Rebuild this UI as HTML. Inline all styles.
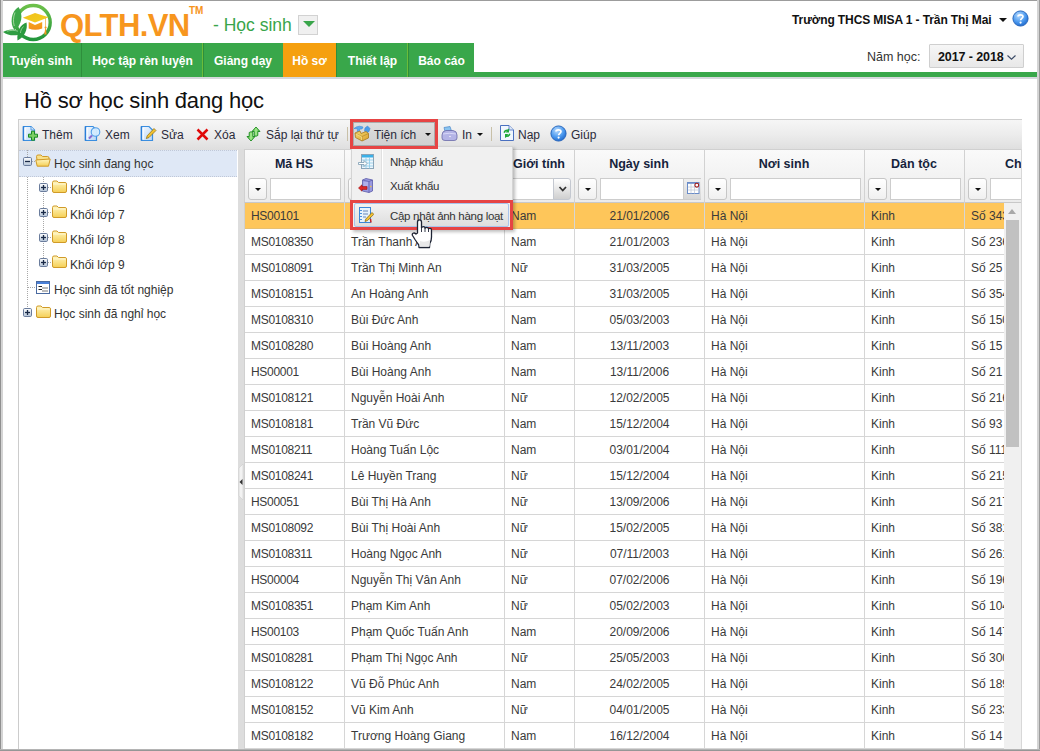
<!DOCTYPE html>
<html><head><meta charset="utf-8"><style>
*{margin:0;padding:0;box-sizing:border-box}
html,body{width:1040px;height:751px;overflow:hidden;background:#fff}
body{position:relative;font-family:"Liberation Sans",sans-serif;color:#222}
.a{position:absolute}
.frame-t{left:0;top:0;width:1040px;height:1px;background:#9c9c9c}
.frame-l{left:0;top:0;width:1px;height:751px;background:#909090}
.frame-l2{left:1px;top:0;width:2px;height:751px;background:#d4d4d4}
.frame-r{left:1039px;top:0;width:1px;height:751px;background:#9c9c9c}
.frame-r2{left:1037px;top:0;width:2px;height:751px;background:#d4d4d4}
.frame-b{left:0;top:749px;width:1040px;height:2px;background:linear-gradient(#b4b4b4 0 1px,#969696 1px)}
.logo-text{left:60px;top:8px;font-size:31px;font-weight:bold;color:#f7961e;line-height:36px;white-space:nowrap;letter-spacing:-0.6px}
.tm{left:189px;top:5px;font-size:10px;font-weight:bold;color:#f7941d;line-height:12px}
.mod{left:213px;top:13px;font-size:17.5px;color:#39a54a;line-height:24px;white-space:nowrap}
.moddd{left:298px;top:15px;width:20px;height:20px;background:#f0f0f0;border:1px solid #d2d2d2}
.user{left:792px;top:11px;font-size:12px;font-weight:bold;color:#111;line-height:18px;white-space:nowrap;letter-spacing:-0.1px}
.nav{left:1px;top:43px;width:473px;height:34px;background:#39a74a}
.navline{left:474px;top:72px;width:563px;height:5px;background:#39a74a}
.grayline{left:1px;top:77px;width:1036px;height:2px;background:#d5d8dc}
.tab{position:absolute;top:0;height:34px;line-height:36px;color:#fff;font-weight:bold;font-size:12px;text-align:center;white-space:nowrap}
.tabsep{position:absolute;top:0;width:1px;height:34px;background:#2e8e3c}
.tabsep2{position:absolute;top:0;width:1px;height:34px;background:#6cbc3a}
.nam{left:867px;top:48px;font-size:12.5px;color:#333;line-height:18px;white-space:nowrap}
.yearbox{left:929px;top:44px;width:95px;height:24px;border:1px solid #cfcfcf;background:linear-gradient(#f6f6f6,#e8e8e8);border-radius:1px}
.year{left:938px;top:48px;font-size:12.5px;font-weight:bold;color:#111;line-height:18px;white-space:nowrap;letter-spacing:-0.1px}
.title{left:24px;top:88px;font-size:22px;color:#111;line-height:26px;white-space:nowrap;letter-spacing:-0.2px}
.toolbar{left:18px;top:119px;width:1004px;height:31px;border-top:1px solid #cfcfcf;border-left:1px solid #cfcfcf;background:linear-gradient(#f6f6f6 0%,#ececec 50%,#dedede 100%)}
.tb{position:absolute;top:126px;font-size:12px;line-height:18px;color:#2a2a3a;white-space:nowrap}
.tbsep{position:absolute;top:127px;width:1px;height:14px;background:#c8c0a8}
.tree{left:18px;top:150px;width:220px;height:601px;border-left:1px solid #cccccc;background:#fff}
.treesel{left:19px;top:150px;width:218px;height:27px;background:#dfe8f6;border-top:1px dotted #c0c8d8;border-bottom:1px dotted #c0c8d8}
.tn{position:absolute;font-size:12px;line-height:18px;color:#333;white-space:nowrap}
.splitter{left:238px;top:149px;width:6px;height:602px;background:#dddddd}
.ghead{left:244px;top:149px;width:777px;height:54px;background:linear-gradient(#fafafa,#ebebeb);border-top:1px solid #d0d0d0;border-bottom:1px solid #c8c8c8;border-left:1px solid #d0d0d0}
.hsep{position:absolute;top:149px;width:1px;height:54px;background:#d2d2d2}
.ht{position:absolute;top:155px;font-size:12.5px;font-weight:bold;color:#15233c;line-height:18px;text-align:center;white-space:nowrap}
.fbtn{position:absolute;top:178px;width:19px;height:22px;border:1px solid #c6c6c6;border-radius:3px;background:linear-gradient(#ffffff,#f0f0f0)}
.fbtn:after{content:"";position:absolute;left:5.5px;top:9px;border-left:3.5px solid transparent;border-right:3.5px solid transparent;border-top:3.5px solid #111}
.finp{position:absolute;top:178px;height:22px;border:1px solid #cdcdcd;background:#fff}
.gbody{left:244px;top:203px;width:760px;height:548px;background:#fff;border-left:1px solid #d0d0d0}
.row{position:absolute;left:245px;width:759px;height:26px;border-bottom:1px solid #d6d6d6;font-size:12px;line-height:27px;color:#3a3a3a}
.row.sel{background:#fec65a;border-bottom-color:#e8c070}
.cell{position:absolute;top:0;height:25px;padding-left:6px;white-space:nowrap;overflow:hidden}
.cell.ctr{text-align:center;padding-left:0}
.vsep{position:absolute;top:203px;width:1px;height:548px;background:#d6d6d6}
.sbar{left:1004px;top:203px;width:17px;height:548px;background:#f0f0f0}
.sthumb{left:1006px;top:220px;width:13px;height:227px;background:#c1c1c1}
.sline{left:1021px;top:149px;width:1px;height:602px;background:#d8d8d8}
.menu{left:351px;top:146px;width:162px;height:84px;background:#f0f0f0;border:1px solid #d4d4d4;box-shadow:2px 2px 3px rgba(0,0,0,0.25)}
.msep{left:381px;top:148px;width:1px;height:52px;background:#e0e0e0}
.msep2{left:382px;top:148px;width:1px;height:52px;background:#fff}
.mi{position:absolute;font-size:11.5px;letter-spacing:-0.3px;line-height:18px;color:#333;white-space:nowrap}
.mhl{left:354px;top:203px;width:155px;height:24px;border:1px solid #a8c4ec;border-radius:2px;background:linear-gradient(#f2f2f2,#dedede)}
.red{position:absolute;border:3px solid #e64444}


</style></head><body>

<!-- logo -->
<svg class="a" style="left:2px;top:2px" width="52" height="42" viewBox="0 0 52 42">
 <defs><linearGradient id="ring" x1="0" y1="0" x2="0" y2="1"><stop offset="0" stop-color="#6cc04a"/><stop offset="1" stop-color="#22963c"/></linearGradient>
 <linearGradient id="capg" x1="0" y1="0" x2="1" y2="1"><stop offset="0" stop-color="#f3bf1a"/><stop offset="1" stop-color="#f0d020"/></linearGradient>
 <linearGradient id="baseg" x1="0" y1="0" x2="0" y2="1"><stop offset="0" stop-color="#f7a41e"/><stop offset="1" stop-color="#f39018"/></linearGradient></defs>
 <circle cx="31.2" cy="20.5" r="17" fill="none" stroke="url(#ring)" stroke-width="3.4"/>
 <path d="M26.7 20 L33 23 L40.2 20 L40.2 26.5 Q33 29 26.7 26.5 Z" fill="url(#baseg)"/>
 <path d="M20.8 15.7 L33 10.9 L46.6 15.2 L33 20.6 Z" fill="url(#capg)"/>
 <path d="M43.3 16 L43.3 26 L42.2 32.6 L44.6 32.6 L43.9 26 L43.9 16 Z" fill="#f39a1e"/>
 <circle cx="43.6" cy="25.5" r="1.1" fill="#f39a1e"/>
 <path d="M16.5 5 C9 9 7.5 22 12.5 28 C20 23.5 21.5 12 16.5 5 Z" fill="#3ea84a"/>
 <path d="M13 10.5 C11.2 15 11 20 12.3 24" fill="none" stroke="#c8ecc0" stroke-width="0.7"/>
 <path d="M1 30 C6.5 26.5 15 26.5 21 31 C14.5 34.5 6.5 34 1 30 Z" fill="#2f9e42"/>
 <path d="M5 29.2 C9 28 13 28.2 16 29.2" fill="none" stroke="#c8ecc0" stroke-width="0.6"/>
 <path d="M24.5 20.5 C18 22.5 14.5 30 15.5 38.5 C22.5 35 26 27 24.5 20.5 Z" fill="#2a9a3e"/>
 <path d="M21.5 24.5 C19.5 26.5 18.5 29 18.5 31" fill="none" stroke="#c8ecc0" stroke-width="0.6"/>
</svg>
<div class="a logo-text">QLTH.VN</div>
<div class="a tm">TM</div>
<div class="a mod">- Học sinh</div>
<div class="a moddd"><div style="position:absolute;left:4px;top:5px;border-left:6px solid transparent;border-right:6px solid transparent;border-top:6px solid #39a54a"></div></div>

<div class="a user">Trường THCS MISA 1 - Trần Thị Mai</div>
<div class="a" style="left:999px;top:18px;border-left:4px solid transparent;border-right:4px solid transparent;border-top:4px solid #111"></div>
<svg class="a" style="left:1012px;top:10px" width="17" height="17" viewBox="0 0 17 17">
 <circle cx="8.5" cy="8.5" r="7.6" fill="url(#hg)" stroke="#2060b8" stroke-width="0.9"/>
 <path d="M6 6.6 C6 4.3 11 4.1 11 6.6 C11 8.3 8.6 8.4 8.6 10.2" fill="none" stroke="#fff" stroke-width="1.7"/>
 <circle cx="8.6" cy="12.6" r="1.1" fill="#fff"/>
</svg>

<!-- nav -->
<div class="a nav">
 <div class="tab" style="left:0;width:80px">Tuyển sinh</div>
 <div class="tabsep" style="left:80px"></div>
 <div class="tab" style="left:81px;width:121px">Học tập rèn luyện</div>
 <div class="tabsep2" style="left:201px"></div><div class="tabsep" style="left:202px"></div>
 <div class="tab" style="left:202px;width:80px">Giảng dạy</div>
 <div class="tab" style="left:282px;width:53px;background:#f5a00f">Hồ sơ</div>
 <div class="tabsep" style="left:335px"></div>
 <div class="tab" style="left:336px;width:71px">Thiết lập</div>
 <div class="tabsep2" style="left:406px"></div><div class="tabsep" style="left:407px"></div>
 <div class="tab" style="left:408px;width:65px">Báo cáo</div>
</div>
<div class="a navline"></div>
<div class="a grayline"></div>

<div class="a nam">Năm học:</div>
<div class="a yearbox"></div>
<div class="a year">2017 - 2018</div>
<svg class="a" style="left:1007px;top:55px" width="9" height="5" viewBox="0 0 9 5"><path d="M0.5 0.5 L4.5 4.2 L8.5 0.5" fill="none" stroke="#3a4a66" stroke-width="1.1"/></svg>

<div class="a title">Hồ sơ học sinh đang học</div>

<!-- toolbar -->
<div class="a toolbar"></div>
<svg class="a" style="left:0;top:0" width="0" height="0"><defs>
 <linearGradient id="docg" x1="0" y1="0" x2="1" y2="1"><stop offset="0" stop-color="#f4f9ff"/><stop offset="1" stop-color="#b8d6f6"/></linearGradient>
 <radialGradient id="hg" cx="40%" cy="30%" r="75%"><stop offset="0" stop-color="#b8dcff"/><stop offset="0.6" stop-color="#4a98ee"/><stop offset="1" stop-color="#1c64c8"/></radialGradient>
 <linearGradient id="fold" x1="0" y1="0" x2="0" y2="1"><stop offset="0" stop-color="#fff6c0"/><stop offset="1" stop-color="#f5cf55"/></linearGradient>
 <linearGradient id="pm" x1="0" y1="0" x2="0" y2="1"><stop offset="0" stop-color="#ffffff"/><stop offset="1" stop-color="#b4c4d8"/></linearGradient>
</defs></svg>
<svg class="a" style="left:22px;top:125px" width="17" height="17" viewBox="0 0 17 17">
 <path d="M1.5 1.5 H9 L12.5 5 V15.5 H1.5 Z" fill="url(#docg)" stroke="#3a8ee0" stroke-width="1.2"/><path d="M1.5 1.5 V15.5" stroke="#2a7ed8" stroke-width="1.6"/>
 <path d="M3 2.5 V14.5" stroke="#ffffff" stroke-width="1.2"/>
 <path d="M9 1.5 V5 H12.5" fill="#dceaf8" stroke="#3a8ee0" stroke-width="0.8"/>
 <path d="M9.5 6.2 H12.5 V9.2 H15.5 V12.2 H12.5 V15.2 H9.5 V12.2 H6.5 V9.2 H9.5 Z" fill="#7ccf62" stroke="#1a8a22" stroke-width="1"/>
</svg>
<div class="tb" style="left:42px">Thêm</div>
<svg class="a" style="left:84px;top:125px" width="17" height="17" viewBox="0 0 17 17">
 <path d="M1.5 1.5 H9 L12.5 5 V15.5 H1.5 Z" fill="url(#docg)" stroke="#3a8ee0" stroke-width="1.2"/><path d="M1.5 1.5 V15.5" stroke="#2a7ed8" stroke-width="1.6"/>
 <path d="M3 2.5 V14.5" stroke="#ffffff" stroke-width="1.2"/>
 <circle cx="11.5" cy="7" r="4.3" fill="#d4ecff" stroke="#4a9ae8" stroke-width="1.1" opacity="0.95"/>
 <path d="M8 10.5 L5 13.5" stroke="#8a6ad0" stroke-width="2"/>
</svg>
<div class="tb" style="left:105px">Xem</div>
<svg class="a" style="left:140px;top:125px" width="17" height="17" viewBox="0 0 17 17">
 <path d="M1.5 1.5 H9 L12.5 5 V15.5 H1.5 Z" fill="url(#docg)" stroke="#3a8ee0" stroke-width="1.2"/><path d="M1.5 1.5 V15.5" stroke="#2a7ed8" stroke-width="1.6"/>
 <path d="M3 2.5 V14.5" stroke="#ffffff" stroke-width="1.2"/>
 <path d="M14 3.5 L16 5.5 L9 12.5 L6.3 13.6 L7.2 10.8 Z" fill="#f2c230" stroke="#8a6a10" stroke-width="0.7"/>
</svg>
<div class="tb" style="left:161px">Sửa</div>
<svg class="a" style="left:196px;top:128px" width="13" height="13" viewBox="0 0 13 13">
 <path d="M1.5 1.5 L11.5 11.5 M11.5 1.5 L1.5 11.5" stroke="#e00808" stroke-width="2.5"/>
</svg>
<div class="tb" style="left:214px">Xóa</div>
<svg class="a" style="left:246px;top:126px" width="15" height="16" viewBox="0 0 15 16">
 <defs><linearGradient id="arg" x1="0" y1="0" x2="1" y2="0"><stop offset="0" stop-color="#44b03a"/><stop offset="0.5" stop-color="#a8ec90"/><stop offset="1" stop-color="#44b03a"/></linearGradient></defs>
 <path d="M10 1 L14 5.5 L11.8 5.5 L11.8 9.5 Q10 11 8.2 9.5 L8.2 5.5 L6 5.5 Z" fill="url(#arg)" stroke="#1a8a1e" stroke-width="0.9" stroke-linejoin="round"/>
 <path d="M5 15 L1 10.5 L3.2 10.5 L3.2 6.5 Q5 5 6.8 6.5 L6.8 10.5 L9 10.5 Z" fill="url(#arg)" stroke="#1a8a1e" stroke-width="0.9" stroke-linejoin="round"/>
</svg>
<div class="tb" style="left:266px">Sắp lại thứ tự</div>
<div class="tbsep" style="left:347px"></div>
<div class="a" style="left:353px;top:122px;width:82px;height:24px;border:1px solid #ababab;background:linear-gradient(#dedede,#d0d0d0)"></div>
<svg class="a" style="left:353px;top:124px" width="18" height="18" viewBox="0 0 18 18">
 <defs><linearGradient id="boxg" x1="0" y1="0" x2="1" y2="1"><stop offset="0" stop-color="#f6dc70"/><stop offset="1" stop-color="#d8a030"/></linearGradient></defs>
 <path d="M1 4.5 Q3 2.5 6.5 2.2 L10 3 L9 5 L7 4.8 L6 9 L4 8.5 L4.8 5 Z" fill="#5aaaf0" stroke="#3a86d8" stroke-width="0.6"/>
 <path d="M12 4 L14.5 2 L17 4.5 L16 7.5 L13.5 9 L11.5 7 Z" fill="#4a9ce8" stroke="#3a86d8" stroke-width="0.6"/>
 <path d="M2 9 L7 7 L8 9.5 L13 7.5 L15.5 9.5 L15.5 14 L9 17 L2.5 13.5 Z" fill="url(#boxg)" stroke="#a87a20" stroke-width="0.8" stroke-linejoin="round"/>
 <path d="M2 9 L9 12.5 L15.5 9.5 M9 12.5 L9 17" fill="none" stroke="#b88a28" stroke-width="0.7"/>
 <path d="M3 10 L8.5 12.8 L8.5 16" fill="none" stroke="#fff2a8" stroke-width="0.6"/>
</svg>
<div class="tb" style="left:374px">Tiện ích</div>
<div class="a" style="left:425px;top:133px;border-left:3px solid transparent;border-right:3px solid transparent;border-top:3px solid #111"></div>
<svg class="a" style="left:441px;top:126px" width="17" height="16" viewBox="0 0 17 16">
 <path d="M3 1.5 L9 0.5 L10.5 5 L4 5.5 Z" fill="#8ac4f0" stroke="#4a86c8" stroke-width="0.7"/>
 <path d="M1 9 Q1 5 5 4.5 L12 4.5 Q16 5 16 9 L16 12 Q16 14.5 13 14.5 L4 14.5 Q1 14.5 1 12 Z" fill="#b4b4e6" stroke="#6a6aa8" stroke-width="0.8"/>
 <path d="M2 8 Q8 6.5 15 8" fill="none" stroke="#d8d8f8" stroke-width="1"/>
 <circle cx="9" cy="10.5" r="0.7" fill="#fff"/>
</svg>
<div class="tb" style="left:462px">In</div>
<div class="a" style="left:477px;top:133px;border-left:3px solid transparent;border-right:3px solid transparent;border-top:3px solid #111"></div>
<div class="tbsep" style="left:491px"></div>
<svg class="a" style="left:500px;top:125px" width="14" height="16" viewBox="0 0 14 16">
 <path d="M0.5 0.5 H9 L13.5 5 V15.5 H0.5 Z" fill="#f0f6fe" stroke="#4a70c0"/>
 <path d="M9 0.5 V5 H13.5" fill="#dde8f8" stroke="#4a70c0" stroke-width="0.8"/>
 <path d="M3.5 7.5 Q4 4.5 7.5 4.5 L9 3.5 V7.5 H5.5 L6.8 6.3 Q5.3 6 4.9 8 Z" fill="#1ea838"/>
 <path d="M10.5 9 Q10 12 6.5 12 L5 13 V9 H8.5 L7.2 10.2 Q8.7 10.5 9.1 8.5 Z" fill="#1ea838"/>
</svg>
<div class="tb" style="left:518px">Nạp</div>
<svg class="a" style="left:550px;top:125px" width="17" height="17" viewBox="0 0 17 17">
 <circle cx="8.5" cy="8.5" r="7.6" fill="url(#hg)" stroke="#2060b8" stroke-width="0.9"/>
 <path d="M6 6.6 C6 4.3 11 4.1 11 6.6 C11 8.3 8.6 8.4 8.6 10.2" fill="none" stroke="#fff" stroke-width="1.7"/>
 <circle cx="8.6" cy="12.6" r="1.1" fill="#fff"/>
</svg>
<div class="tb" style="left:571px">Giúp</div>

<!-- tree -->
<div class="a tree"></div>
<div class="a treesel"></div>
<div class="tn" style="left:54px;top:155px">Học sinh đang học</div>
<div class="tn" style="left:70px;top:181px">Khối lớp 6</div>
<div class="tn" style="left:70px;top:206px">Khối lớp 7</div>
<div class="tn" style="left:70px;top:231px">Khối lớp 8</div>
<div class="tn" style="left:70px;top:256px">Khối lớp 9</div>
<div class="tn" style="left:54px;top:281px">Học sinh đã tốt nghiệp</div>
<div class="tn" style="left:54px;top:305px">Học sinh đã nghỉ học</div>
<div class="a" style="left:27px;top:177px;width:1px;height:123px;background:repeating-linear-gradient(#a8a8a8 0 1px,transparent 1px 2px)"></div>
<div class="a" style="left:27px;top:150px;width:1px;height:7px;background:repeating-linear-gradient(#a8a8a8 0 1px,transparent 1px 2px)"></div>
<div class="a" style="left:43px;top:177px;width:1px;height:85px;background:repeating-linear-gradient(#a8a8a8 0 1px,transparent 1px 2px)"></div>
<div class="a" style="left:28px;top:287px;width:8px;height:1px;background:repeating-linear-gradient(90deg,#a8a8a8 0 1px,transparent 1px 2px)"></div>
<div class="a" style="left:32px;top:161px;width:3px;height:1px;background:repeating-linear-gradient(90deg,#a8a8a8 0 1px,transparent 1px 2px)"></div>
<div class="a" style="left:48px;top:187px;width:4px;height:1px;background:repeating-linear-gradient(90deg,#a8a8a8 0 1px,transparent 1px 2px)"></div>
<div class="a" style="left:48px;top:212px;width:4px;height:1px;background:repeating-linear-gradient(90deg,#a8a8a8 0 1px,transparent 1px 2px)"></div>
<div class="a" style="left:48px;top:237px;width:4px;height:1px;background:repeating-linear-gradient(90deg,#a8a8a8 0 1px,transparent 1px 2px)"></div>
<div class="a" style="left:48px;top:262px;width:4px;height:1px;background:repeating-linear-gradient(90deg,#a8a8a8 0 1px,transparent 1px 2px)"></div>
<svg class="a" style="left:23px;top:157px" width="9" height="9" viewBox="0 0 9 9"><rect x="0.5" y="0.5" width="8" height="8" rx="1.2" fill="url(#pm)" stroke="#6a7c9c"/><path d="M2 4.5 H7" stroke="#1a2a48" stroke-width="1.3"/></svg>
<svg class="a" style="left:35px;top:154px" width="16" height="13" viewBox="0 0 16 13"><path d="M1.5 2.5 Q1.5 1 3 1 L6 1 L7.5 2.5 L12.5 2.5 Q14 2.5 14 4 L14 6 L2 6 Z" fill="#f8e08a" stroke="#d09a28"/><path d="M0.8 6 L15.2 5 L13.5 12.2 L2.2 12.2 Z" fill="url(#fold)" stroke="#d09a28"/></svg>
<svg class="a" style="left:39px;top:183px" width="9" height="9" viewBox="0 0 9 9"><rect x="0.5" y="0.5" width="8" height="8" rx="1.2" fill="url(#pm)" stroke="#6a7c9c"/><path d="M2 4.5 H7" stroke="#1a2a48" stroke-width="1.3"/><path d="M4.5 2 V7" stroke="#1a2a48" stroke-width="1.3"/></svg>
<svg class="a" style="left:52px;top:180px" width="15" height="13" viewBox="0 0 15 13"><path d="M0.5 2.5 Q0.5 1 2 1 L5 1 L6.5 2.5 L13 2.5 Q14.5 2.5 14.5 4 L14.5 11 Q14.5 12.5 13 12.5 L2 12.5 Q0.5 12.5 0.5 11 Z" fill="url(#fold)" stroke="#d09a28"/><path d="M1 4 H14" stroke="#fffbe0" stroke-width="0.8"/></svg>
<svg class="a" style="left:39px;top:208px" width="9" height="9" viewBox="0 0 9 9"><rect x="0.5" y="0.5" width="8" height="8" rx="1.2" fill="url(#pm)" stroke="#6a7c9c"/><path d="M2 4.5 H7" stroke="#1a2a48" stroke-width="1.3"/><path d="M4.5 2 V7" stroke="#1a2a48" stroke-width="1.3"/></svg>
<svg class="a" style="left:52px;top:205px" width="15" height="13" viewBox="0 0 15 13"><path d="M0.5 2.5 Q0.5 1 2 1 L5 1 L6.5 2.5 L13 2.5 Q14.5 2.5 14.5 4 L14.5 11 Q14.5 12.5 13 12.5 L2 12.5 Q0.5 12.5 0.5 11 Z" fill="url(#fold)" stroke="#d09a28"/><path d="M1 4 H14" stroke="#fffbe0" stroke-width="0.8"/></svg>
<svg class="a" style="left:39px;top:233px" width="9" height="9" viewBox="0 0 9 9"><rect x="0.5" y="0.5" width="8" height="8" rx="1.2" fill="url(#pm)" stroke="#6a7c9c"/><path d="M2 4.5 H7" stroke="#1a2a48" stroke-width="1.3"/><path d="M4.5 2 V7" stroke="#1a2a48" stroke-width="1.3"/></svg>
<svg class="a" style="left:52px;top:230px" width="15" height="13" viewBox="0 0 15 13"><path d="M0.5 2.5 Q0.5 1 2 1 L5 1 L6.5 2.5 L13 2.5 Q14.5 2.5 14.5 4 L14.5 11 Q14.5 12.5 13 12.5 L2 12.5 Q0.5 12.5 0.5 11 Z" fill="url(#fold)" stroke="#d09a28"/><path d="M1 4 H14" stroke="#fffbe0" stroke-width="0.8"/></svg>
<svg class="a" style="left:39px;top:258px" width="9" height="9" viewBox="0 0 9 9"><rect x="0.5" y="0.5" width="8" height="8" rx="1.2" fill="url(#pm)" stroke="#6a7c9c"/><path d="M2 4.5 H7" stroke="#1a2a48" stroke-width="1.3"/><path d="M4.5 2 V7" stroke="#1a2a48" stroke-width="1.3"/></svg>
<svg class="a" style="left:52px;top:255px" width="15" height="13" viewBox="0 0 15 13"><path d="M0.5 2.5 Q0.5 1 2 1 L5 1 L6.5 2.5 L13 2.5 Q14.5 2.5 14.5 4 L14.5 11 Q14.5 12.5 13 12.5 L2 12.5 Q0.5 12.5 0.5 11 Z" fill="url(#fold)" stroke="#d09a28"/><path d="M1 4 H14" stroke="#fffbe0" stroke-width="0.8"/></svg>
<svg class="a" style="left:36px;top:281px" width="14" height="13" viewBox="0 0 14 13"><rect x="0.5" y="0.5" width="13" height="12" fill="#fff" stroke="#4a6aa0"/><rect x="1" y="1" width="12" height="2" fill="#4a80d8"/><path d="M2.5 5.5 H6 M2.5 8.5 H6" stroke="#222" stroke-width="1"/><path d="M6 7 H12 M6 10 H12" stroke="#777" stroke-width="1"/></svg>
<div class="a" style="left:27px;top:302px;width:1px;height:6px;background:repeating-linear-gradient(#a8a8a8 0 1px,transparent 1px 2px)"></div>
<svg class="a" style="left:23px;top:308px" width="9" height="9" viewBox="0 0 9 9"><rect x="0.5" y="0.5" width="8" height="8" rx="1.2" fill="url(#pm)" stroke="#6a7c9c"/><path d="M2 4.5 H7" stroke="#1a2a48" stroke-width="1.3"/><path d="M4.5 2 V7" stroke="#1a2a48" stroke-width="1.3"/></svg>
<svg class="a" style="left:36px;top:305px" width="15" height="13" viewBox="0 0 15 13"><path d="M0.5 2.5 Q0.5 1 2 1 L5 1 L6.5 2.5 L13 2.5 Q14.5 2.5 14.5 4 L14.5 11 Q14.5 12.5 13 12.5 L2 12.5 Q0.5 12.5 0.5 11 Z" fill="url(#fold)" stroke="#d09a28"/><path d="M1 4 H14" stroke="#fffbe0" stroke-width="0.8"/></svg>

<div class="a splitter"></div>
<svg class="a" style="left:238px;top:464px" width="6" height="36" viewBox="0 0 6 36"><path d="M5 0 L1 4 L1 32 L5 36 Z" fill="#f2f2f2" stroke="#cfcfcf" stroke-width="0.6"/><path d="M1.5 18 L4.5 15 L4.5 21 Z" fill="#333"/></svg>

<!-- grid -->
<div class="a ghead"></div>
<div class="hsep" style="left:344px"></div>
<div class="hsep" style="left:504px"></div>
<div class="hsep" style="left:574px"></div>
<div class="hsep" style="left:704px"></div>
<div class="hsep" style="left:864px"></div>
<div class="hsep" style="left:964px"></div>
<div class="ht" style="left:244px;width:100px">Mã HS</div>
<div class="ht" style="left:344px;width:160px">Họ và tên</div>
<div class="ht" style="left:504px;width:70px">Giới tính</div>
<div class="ht" style="left:574px;width:130px">Ngày sinh</div>
<div class="ht" style="left:704px;width:160px">Nơi sinh</div>
<div class="ht" style="left:864px;width:100px">Dân tộc</div>
<div class="ht" style="left:1005px;width:16px;overflow:hidden;text-align:left">Chỗ ở</div>
<div class="fbtn" style="left:248px"></div><div class="finp" style="left:270px;width:71px"></div>
<div class="fbtn" style="left:348px"></div><div class="finp" style="left:370px;width:131px"></div>
<div class="finp" style="left:508px;width:46px"></div>
<div class="a" style="left:553px;top:178px;width:18px;height:22px;border:1px solid #c4c8d0;border-radius:0 3px 3px 0;background:linear-gradient(#ffffff,#cfcfcf)"><svg style="position:absolute;left:3.5px;top:7px" width="10" height="7" viewBox="0 0 10 7"><path d="M1.5 1 L4.75 4.5 L8 1" fill="none" stroke="#333" stroke-width="1.8"/></svg></div>
<div class="fbtn" style="left:578px"></div><div class="finp" style="left:600px;width:101px"></div>
<div class="a" style="left:683px;top:179px;width:18px;height:20px;background:linear-gradient(#f0f0f0,#d6d6d6);border-left:1px solid #cdcdcd"><svg style="position:absolute;left:2px;top:2px" width="14" height="13" viewBox="0 0 14 13"><rect x="1.5" y="1.5" width="11.5" height="11" fill="#fff" stroke="#6a8cc8"/><path d="M2 2.2 H12.5" stroke="#6a8cc8" stroke-width="1.2"/><path d="M5 3 V12.5 M8.5 3 V12.5 M2 6 H12.5 M2 9 H12.5" stroke="#c4ccd8" stroke-width="0.8"/><circle cx="10.8" cy="4.2" r="1.9" fill="#fff" stroke="#a01818" stroke-width="1.1"/></svg></div>
<div class="fbtn" style="left:708px"></div><div class="finp" style="left:730px;width:131px"></div>
<div class="fbtn" style="left:868px"></div><div class="finp" style="left:890px;width:71px"></div>
<div class="fbtn" style="left:968px"></div><div class="finp" style="left:990px;width:40px"></div>

<div class="a gbody"></div>
<div class="row sel" style="top:203px"><div class="cell" style="left:0px;width:99px;letter-spacing:-0.3px;">HS00101</div><div class="cell" style="left:100px;width:159px;">Trần Thanh An</div><div class="cell" style="left:260px;width:69px;">Nam</div><div class="cell ctr" style="left:330px;width:129px;">21/01/2006</div><div class="cell" style="left:460px;width:159px;">Hà Nội</div><div class="cell" style="left:620px;width:99px;">Kinh</div><div class="cell" style="left:720px;width:39px;">Số 343</div></div>
<div class="row" style="top:229px"><div class="cell" style="left:0px;width:99px;letter-spacing:-0.3px;">MS0108350</div><div class="cell" style="left:100px;width:159px;">Trần Thanh An</div><div class="cell" style="left:260px;width:69px;">Nam</div><div class="cell ctr" style="left:330px;width:129px;">21/01/2003</div><div class="cell" style="left:460px;width:159px;">Hà Nội</div><div class="cell" style="left:620px;width:99px;">Kinh</div><div class="cell" style="left:720px;width:39px;">Số 236</div></div>
<div class="row" style="top:255px"><div class="cell" style="left:0px;width:99px;letter-spacing:-0.3px;">MS0108091</div><div class="cell" style="left:100px;width:159px;">Trần Thị Minh An</div><div class="cell" style="left:260px;width:69px;">Nữ</div><div class="cell ctr" style="left:330px;width:129px;">31/03/2005</div><div class="cell" style="left:460px;width:159px;">Hà Nội</div><div class="cell" style="left:620px;width:99px;">Kinh</div><div class="cell" style="left:720px;width:39px;">Số 25</div></div>
<div class="row" style="top:281px"><div class="cell" style="left:0px;width:99px;letter-spacing:-0.3px;">MS0108151</div><div class="cell" style="left:100px;width:159px;">An Hoàng Anh</div><div class="cell" style="left:260px;width:69px;">Nam</div><div class="cell ctr" style="left:330px;width:129px;">31/03/2005</div><div class="cell" style="left:460px;width:159px;">Hà Nội</div><div class="cell" style="left:620px;width:99px;">Kinh</div><div class="cell" style="left:720px;width:39px;">Số 354</div></div>
<div class="row" style="top:307px"><div class="cell" style="left:0px;width:99px;letter-spacing:-0.3px;">MS0108310</div><div class="cell" style="left:100px;width:159px;">Bùi Đức Anh</div><div class="cell" style="left:260px;width:69px;">Nam</div><div class="cell ctr" style="left:330px;width:129px;">05/03/2003</div><div class="cell" style="left:460px;width:159px;">Hà Nội</div><div class="cell" style="left:620px;width:99px;">Kinh</div><div class="cell" style="left:720px;width:39px;">Số 150</div></div>
<div class="row" style="top:333px"><div class="cell" style="left:0px;width:99px;letter-spacing:-0.3px;">MS0108280</div><div class="cell" style="left:100px;width:159px;">Bùi Hoàng Anh</div><div class="cell" style="left:260px;width:69px;">Nam</div><div class="cell ctr" style="left:330px;width:129px;">13/11/2003</div><div class="cell" style="left:460px;width:159px;">Hà Nội</div><div class="cell" style="left:620px;width:99px;">Kinh</div><div class="cell" style="left:720px;width:39px;">Số 15</div></div>
<div class="row" style="top:359px"><div class="cell" style="left:0px;width:99px;letter-spacing:-0.3px;">HS00001</div><div class="cell" style="left:100px;width:159px;">Bùi Hoàng Anh</div><div class="cell" style="left:260px;width:69px;">Nam</div><div class="cell ctr" style="left:330px;width:129px;">13/11/2006</div><div class="cell" style="left:460px;width:159px;">Hà Nội</div><div class="cell" style="left:620px;width:99px;">Kinh</div><div class="cell" style="left:720px;width:39px;">Số 21</div></div>
<div class="row" style="top:385px"><div class="cell" style="left:0px;width:99px;letter-spacing:-0.3px;">MS0108121</div><div class="cell" style="left:100px;width:159px;">Nguyễn Hoài Anh</div><div class="cell" style="left:260px;width:69px;">Nữ</div><div class="cell ctr" style="left:330px;width:129px;">12/02/2005</div><div class="cell" style="left:460px;width:159px;">Hà Nội</div><div class="cell" style="left:620px;width:99px;">Kinh</div><div class="cell" style="left:720px;width:39px;">Số 216</div></div>
<div class="row" style="top:411px"><div class="cell" style="left:0px;width:99px;letter-spacing:-0.3px;">MS0108181</div><div class="cell" style="left:100px;width:159px;">Trần Vũ Đức</div><div class="cell" style="left:260px;width:69px;">Nam</div><div class="cell ctr" style="left:330px;width:129px;">15/12/2004</div><div class="cell" style="left:460px;width:159px;">Hà Nội</div><div class="cell" style="left:620px;width:99px;">Kinh</div><div class="cell" style="left:720px;width:39px;">Số 93</div></div>
<div class="row" style="top:437px"><div class="cell" style="left:0px;width:99px;letter-spacing:-0.3px;">MS0108211</div><div class="cell" style="left:100px;width:159px;">Hoàng Tuấn Lộc</div><div class="cell" style="left:260px;width:69px;">Nam</div><div class="cell ctr" style="left:330px;width:129px;">03/01/2004</div><div class="cell" style="left:460px;width:159px;">Hà Nội</div><div class="cell" style="left:620px;width:99px;">Kinh</div><div class="cell" style="left:720px;width:39px;">Số 111</div></div>
<div class="row" style="top:463px"><div class="cell" style="left:0px;width:99px;letter-spacing:-0.3px;">MS0108241</div><div class="cell" style="left:100px;width:159px;">Lê Huyền Trang</div><div class="cell" style="left:260px;width:69px;">Nữ</div><div class="cell ctr" style="left:330px;width:129px;">15/12/2004</div><div class="cell" style="left:460px;width:159px;">Hà Nội</div><div class="cell" style="left:620px;width:99px;">Kinh</div><div class="cell" style="left:720px;width:39px;">Số 215</div></div>
<div class="row" style="top:489px"><div class="cell" style="left:0px;width:99px;letter-spacing:-0.3px;">HS00051</div><div class="cell" style="left:100px;width:159px;">Bùi Thị Hà Anh</div><div class="cell" style="left:260px;width:69px;">Nữ</div><div class="cell ctr" style="left:330px;width:129px;">13/09/2006</div><div class="cell" style="left:460px;width:159px;">Hà Nội</div><div class="cell" style="left:620px;width:99px;">Kinh</div><div class="cell" style="left:720px;width:39px;">Số 217</div></div>
<div class="row" style="top:515px"><div class="cell" style="left:0px;width:99px;letter-spacing:-0.3px;">MS0108092</div><div class="cell" style="left:100px;width:159px;">Bùi Thị Hoài Anh</div><div class="cell" style="left:260px;width:69px;">Nữ</div><div class="cell ctr" style="left:330px;width:129px;">15/02/2005</div><div class="cell" style="left:460px;width:159px;">Hà Nội</div><div class="cell" style="left:620px;width:99px;">Kinh</div><div class="cell" style="left:720px;width:39px;">Số 381</div></div>
<div class="row" style="top:541px"><div class="cell" style="left:0px;width:99px;letter-spacing:-0.3px;">MS0108311</div><div class="cell" style="left:100px;width:159px;">Hoàng Ngọc Anh</div><div class="cell" style="left:260px;width:69px;">Nữ</div><div class="cell ctr" style="left:330px;width:129px;">07/11/2003</div><div class="cell" style="left:460px;width:159px;">Hà Nội</div><div class="cell" style="left:620px;width:99px;">Kinh</div><div class="cell" style="left:720px;width:39px;">Số 261</div></div>
<div class="row" style="top:567px"><div class="cell" style="left:0px;width:99px;letter-spacing:-0.3px;">HS00004</div><div class="cell" style="left:100px;width:159px;">Nguyễn Thị Vân Anh</div><div class="cell" style="left:260px;width:69px;">Nữ</div><div class="cell ctr" style="left:330px;width:129px;">07/02/2006</div><div class="cell" style="left:460px;width:159px;">Hà Nội</div><div class="cell" style="left:620px;width:99px;">Kinh</div><div class="cell" style="left:720px;width:39px;">Số 196</div></div>
<div class="row" style="top:593px"><div class="cell" style="left:0px;width:99px;letter-spacing:-0.3px;">MS0108351</div><div class="cell" style="left:100px;width:159px;">Phạm Kim Anh</div><div class="cell" style="left:260px;width:69px;">Nữ</div><div class="cell ctr" style="left:330px;width:129px;">05/02/2003</div><div class="cell" style="left:460px;width:159px;">Hà Nội</div><div class="cell" style="left:620px;width:99px;">Kinh</div><div class="cell" style="left:720px;width:39px;">Số 104</div></div>
<div class="row" style="top:619px"><div class="cell" style="left:0px;width:99px;letter-spacing:-0.3px;">HS00103</div><div class="cell" style="left:100px;width:159px;">Phạm Quốc Tuấn Anh</div><div class="cell" style="left:260px;width:69px;">Nam</div><div class="cell ctr" style="left:330px;width:129px;">20/09/2006</div><div class="cell" style="left:460px;width:159px;">Hà Nội</div><div class="cell" style="left:620px;width:99px;">Kinh</div><div class="cell" style="left:720px;width:39px;">Số 147</div></div>
<div class="row" style="top:645px"><div class="cell" style="left:0px;width:99px;letter-spacing:-0.3px;">MS0108281</div><div class="cell" style="left:100px;width:159px;">Phạm Thị Ngọc Anh</div><div class="cell" style="left:260px;width:69px;">Nữ</div><div class="cell ctr" style="left:330px;width:129px;">25/05/2003</div><div class="cell" style="left:460px;width:159px;">Hà Nội</div><div class="cell" style="left:620px;width:99px;">Kinh</div><div class="cell" style="left:720px;width:39px;">Số 300</div></div>
<div class="row" style="top:671px"><div class="cell" style="left:0px;width:99px;letter-spacing:-0.3px;">MS0108122</div><div class="cell" style="left:100px;width:159px;">Vũ Đỗ Phúc Anh</div><div class="cell" style="left:260px;width:69px;">Nam</div><div class="cell ctr" style="left:330px;width:129px;">24/02/2005</div><div class="cell" style="left:460px;width:159px;">Hà Nội</div><div class="cell" style="left:620px;width:99px;">Kinh</div><div class="cell" style="left:720px;width:39px;">Số 189</div></div>
<div class="row" style="top:697px"><div class="cell" style="left:0px;width:99px;letter-spacing:-0.3px;">MS0108152</div><div class="cell" style="left:100px;width:159px;">Vũ Kim Anh</div><div class="cell" style="left:260px;width:69px;">Nữ</div><div class="cell ctr" style="left:330px;width:129px;">04/01/2005</div><div class="cell" style="left:460px;width:159px;">Hà Nội</div><div class="cell" style="left:620px;width:99px;">Kinh</div><div class="cell" style="left:720px;width:39px;">Số 233</div></div>
<div class="row" style="top:723px"><div class="cell" style="left:0px;width:99px;letter-spacing:-0.3px;">MS0108182</div><div class="cell" style="left:100px;width:159px;">Trương Hoàng Giang</div><div class="cell" style="left:260px;width:69px;">Nam</div><div class="cell ctr" style="left:330px;width:129px;">16/12/2004</div><div class="cell" style="left:460px;width:159px;">Hà Nội</div><div class="cell" style="left:620px;width:99px;">Kinh</div><div class="cell" style="left:720px;width:39px;">Số 14</div></div>
<div class="vsep" style="left:344px"></div>
<div class="vsep" style="left:504px"></div>
<div class="vsep" style="left:574px"></div>
<div class="vsep" style="left:704px"></div>
<div class="vsep" style="left:864px"></div>
<div class="vsep" style="left:964px"></div>
<div class="a sbar"></div>
<div class="a sthumb"></div>
<div class="a" style="left:1008px;top:209px;border-left:4.5px solid transparent;border-right:4.5px solid transparent;border-bottom:5px solid #a8a8a8"></div>
<div class="a sline"></div>
<div class="a" style="left:1022px;top:119px;width:15px;height:632px;background:#fff"></div>

<!-- menu -->
<div class="a menu"></div>
<div class="a msep"></div><div class="a msep2"></div>
<div class="a mhl"></div>
<div class="mi" style="left:390px;top:153px">Nhập khẩu</div>
<div class="mi" style="left:390px;top:177px">Xuất khẩu</div>
<div class="mi" style="left:390px;top:207px">Cập nhật ảnh hàng loạt</div>
<svg class="a" style="left:358px;top:154px" width="16" height="15" viewBox="0 0 16 15"><rect x="3.5" y="0.5" width="12" height="14" fill="#eef6fc" stroke="#8aa4b8"/><rect x="4" y="1" width="11" height="2.5" fill="#3ab0e8"/><path d="M4 6 H15 M4 9 H15 M4 12 H15 M8 3.5 V14.5 M11.5 3.5 V14.5" stroke="#8ccbe8" stroke-width="0.8"/><path d="M0.5 8.5 H6 V6.5 L9 9.5 L6 12.5 V10.5 H0.5 Z" fill="#fff" stroke="#7a9ab0" stroke-width="0.8"/></svg>
<svg class="a" style="left:358px;top:178px" width="15" height="15" viewBox="0 0 15 15"><path d="M4.5 2 L8 0.5 L14.5 2 L14.5 13 L11 14.5 L4.5 13 Z" fill="#9a9ae0" stroke="#5a5aa8" stroke-width="0.8"/><path d="M4.5 2 L11 3.5 L14.5 2 M11 3.5 V14.5" fill="none" stroke="#5a5aa8" stroke-width="0.7"/><path d="M5.5 5 H10 M5.5 7 H10" stroke="#d0d0f8" stroke-width="0.8"/><circle cx="12.8" cy="8.5" r="0.8" fill="#f0c040"/><path d="M0.5 10 L4 6.8 V8.6 H9 V11.4 H4 V13.2 Z" fill="#e02828" stroke="#a01010" stroke-width="0.6"/></svg>
<svg class="a" style="left:359px;top:207px" width="15" height="16" viewBox="0 0 15 16"><rect x="0.5" y="0.5" width="11" height="15" fill="#e6f2fc" stroke="#3a88d8"/><path d="M0.5 3.5 H3 M0.5 6.5 H3 M0.5 9.5 H3 M0.5 12.5 H3" stroke="#3a88d8" stroke-width="0.9"/><path d="M4 4 H9 M4 7 H9 M4 10 H7" stroke="#5a7ab0" stroke-width="0.9"/><path d="M13 5.5 L14.8 7.3 L8.5 13.6 L6 14.5 L6.8 12 Z" fill="#f2c230" stroke="#806010" stroke-width="0.7"/><path d="M11.5 12 L12 15.5" stroke="#d02020" stroke-width="1.5"/></svg>
<div class="red" style="left:350px;top:119px;width:88px;height:30px"></div>
<div class="red" style="left:350px;top:200px;width:163px;height:30px"></div>
<svg class="a" style="left:411px;top:219px" width="22" height="30" viewBox="0 0 22 30"><path d="M6.5 14 L6.5 3 Q6.5 0.8 8.5 0.8 Q10.5 0.8 10.5 3 L10.5 8.8 Q11 7.6 12.5 7.6 Q14 7.6 14 9 Q14.5 8.3 15.8 8.3 Q17.3 8.3 17.5 9.8 Q18 9.3 19 9.3 Q20.5 9.3 20.5 11 L20.5 18 Q20.5 22 18.8 24.5 L18.5 28.5 L8 28.5 L7.8 26 Q6 23.5 4 20.5 L1.5 16.5 Q0.8 15 2 14.3 Q3.5 13.5 5 15 Z" fill="#fff" stroke="#1e2434" stroke-width="1.3" stroke-linejoin="round"/><path d="M14 9 V13 M17.5 9.8 V13 M10.5 8.8 V13" stroke="#1e2434" stroke-width="0.9"/><path d="M9 22 Q14 24 19 21 L18.7 27.5 L8.5 27.5 Z" fill="#e8e8e8"/></svg>

<div class="a frame-t"></div>
<div class="a frame-l"></div><div class="a frame-l2"></div>
<div class="a frame-r2"></div><div class="a frame-r"></div>
<div class="a frame-b"></div>

</body></html>
